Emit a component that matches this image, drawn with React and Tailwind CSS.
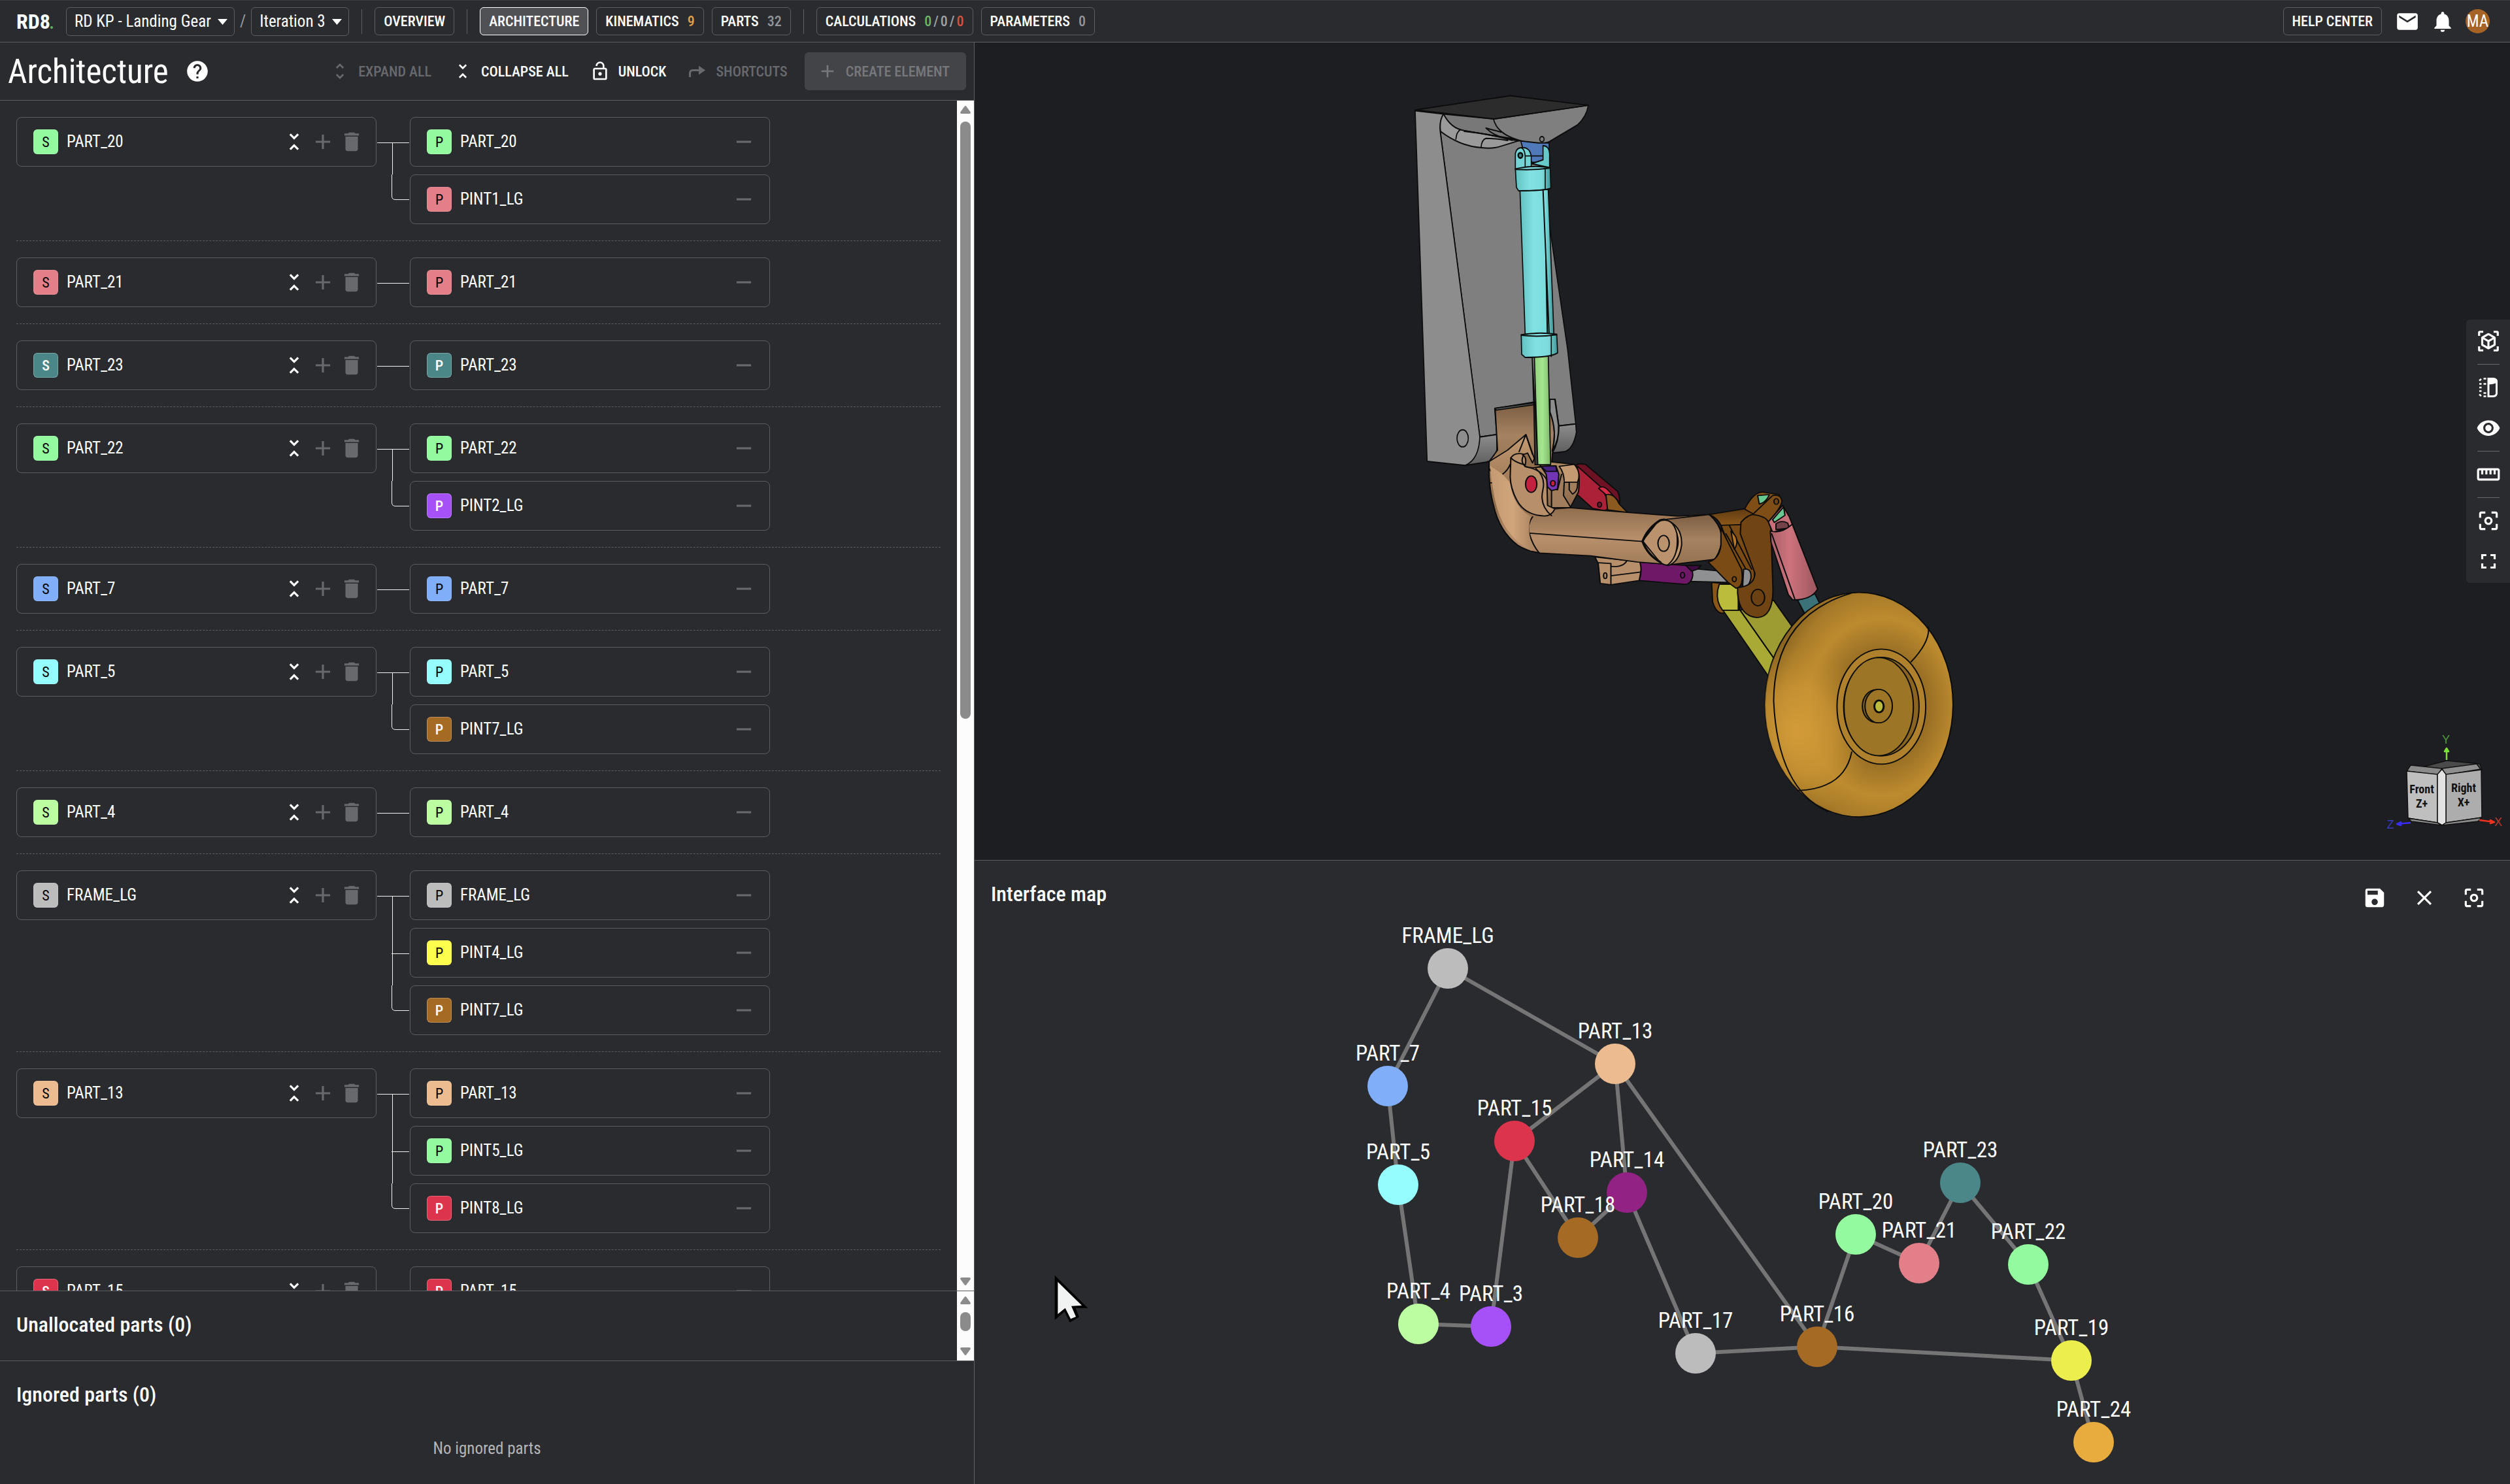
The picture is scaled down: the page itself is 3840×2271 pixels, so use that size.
import React from 'react';
import {
    MdAdd,
    MdCenterFocusWeak,
    MdClose,
    MdDelete,
    MdEmail,
    MdFullscreen,
    MdHelp,
    MdLockOpen,
    MdNotifications,
    MdRemove,
    MdSave,
    MdStraighten,
    MdUnfoldLess,
    MdUnfoldMore,
    MdViewInAr,
    MdVisibility,
} from 'react-icons/md';

// label colour on the badge: dark text unless `light` is set
const COLORS = {
    green: { bg: '#94fa9f' },
    pink: { bg: '#e27f88' },
    teal: { bg: '#4b8788', light: true },
    violet: { bg: '#a551f7', light: true },
    blue: { bg: '#80aef8' },
    cyan: { bg: '#95fdfe' },
    brown: { bg: '#a56a24', light: true },
    lime: { bg: '#bbfda0' },
    grey: { bg: '#bcbcbc' },
    yellow: { bg: '#fdfd4d' },
    peach: { bg: '#ecbc90' },
    red: { bg: '#dc344c', light: true },
};

const SOLIDS = [
    { name: 'PART_20', color: 'green', parts: [['PART_20', 'green'], ['PINT1_LG', 'pink']] },
    { name: 'PART_21', color: 'pink', parts: [['PART_21', 'pink']] },
    { name: 'PART_23', color: 'teal', parts: [['PART_23', 'teal']] },
    { name: 'PART_22', color: 'green', parts: [['PART_22', 'green'], ['PINT2_LG', 'violet']] },
    { name: 'PART_7', color: 'blue', parts: [['PART_7', 'blue']] },
    { name: 'PART_5', color: 'cyan', parts: [['PART_5', 'cyan'], ['PINT7_LG', 'brown']] },
    { name: 'PART_4', color: 'lime', parts: [['PART_4', 'lime']] },
    { name: 'FRAME_LG', color: 'grey', parts: [['FRAME_LG', 'grey'], ['PINT4_LG', 'yellow'], ['PINT7_LG', 'brown']] },
    { name: 'PART_13', color: 'peach', parts: [['PART_13', 'peach'], ['PINT5_LG', 'green'], ['PINT8_LG', 'red']] },
    { name: 'PART_15', color: 'red', parts: [['PART_15', 'red']] },
];

const NODES = {
    FRAME_LG: { x: 724, y: 75, fill: '#bcbcbc' },
    PART_7: { x: 632, y: 255, fill: '#80aef8' },
    PART_5: { x: 648, y: 406, fill: '#95fdfe' },
    PART_4: { x: 679, y: 619, fill: '#bbfda0' },
    PART_3: { x: 790, y: 623, fill: '#a551f7' },
    PART_13: { x: 980, y: 221, fill: '#ecbc90' },
    PART_15: { x: 826, y: 339, fill: '#dc344c' },
    PART_14: { x: 998, y: 418, fill: '#922283' },
    PART_18: { x: 923, y: 487, fill: '#a56a24' },
    PART_17: { x: 1103, y: 664, fill: '#bcbcbc' },
    PART_16: { x: 1289, y: 654, fill: '#a56a24' },
    PART_20: { x: 1348, y: 482, fill: '#94fa9f' },
    PART_21: { x: 1445, y: 526, fill: '#e27f88' },
    PART_23: { x: 1508, y: 403, fill: '#4b8788' },
    PART_22: { x: 1612, y: 528, fill: '#94fa9f' },
    PART_19: { x: 1678, y: 675, fill: '#ebee4c' },
    PART_24: { x: 1712, y: 800, fill: '#e8ab3e' },
};

const EDGES = [
    ['FRAME_LG', 'PART_7'],
    ['FRAME_LG', 'PART_13'],
    ['PART_7', 'PART_5'],
    ['PART_5', 'PART_4'],
    ['PART_4', 'PART_3'],
    ['PART_3', 'PART_15'],
    ['PART_15', 'PART_13'],
    ['PART_15', 'PART_18'],
    ['PART_18', 'PART_14'],
    ['PART_13', 'PART_14'],
    ['PART_13', 'PART_16'],
    ['PART_14', 'PART_17'],
    ['PART_17', 'PART_16'],
    ['PART_16', 'PART_20'],
    ['PART_16', 'PART_19'],
    ['PART_20', 'PART_21'],
    ['PART_21', 'PART_23'],
    ['PART_23', 'PART_22'],
    ['PART_22', 'PART_19'],
    ['PART_19', 'PART_24'],
];

function HeaderSelect({ label, value }) {
    return (
        <div className="relative">
            <select
                aria-label={label}
                defaultValue={value}
                className="h-11 appearance-none rounded-md border border-[#5c5d61] bg-transparent pl-3 pr-[35px] text-[25px] text-white"
            >
                <option>{value}</option>
            </select>
            <svg viewBox="0 0 15 9" className="pointer-events-none absolute right-[11px] top-[18px] h-[9px] w-[15px]" fill="white">
                <path d="M0 0H15L7.5 9Z" />
            </svg>
        </div>
    );
}

function NavButton({ active, children }) {
    return (
        <button
            className={
                active
                    ? 'flex h-[43px] items-center gap-[13px] rounded-md border border-white bg-[#505155] px-[13px] text-[22px] font-medium'
                    : 'flex h-[43px] items-center gap-[13px] rounded-md border border-[#5c5d61] px-[13px] text-[22px] font-medium'
            }
        >
            {children}
        </button>
    );
}

function NavDivider() {
    return <div className="mx-[19px] h-[38px] w-px bg-[#5c5d61]" />;
}

function Header() {
    return (
        <header className="flex h-[65px] shrink-0 items-center border-b border-t border-b-[#5c5d61] border-t-[#3c3d41] bg-[#2a2b2f] pl-[25px] pr-[31px]">
            <a href="#home" className="flex items-baseline text-[32px] font-bold">
                RD8
                <span className="h-1 w-1 rounded-full bg-[#5cb85c]" />
            </a>
            <div className="ml-5 flex items-center gap-2">
                <HeaderSelect label="Project" value="RD KP - Landing Gear" />
                <span className="text-[25px] text-[#9a9b9e]">/</span>
                <HeaderSelect label="Iteration" value="Iteration 3" />
            </div>
            <NavDivider />
            <NavButton>OVERVIEW</NavButton>
            <NavDivider />
            <nav className="flex gap-3">
                <NavButton active>ARCHITECTURE</NavButton>
                <NavButton>
                    KINEMATICS <span className="text-[#e0a04a]">9</span>
                </NavButton>
                <NavButton>
                    PARTS <span className="text-[#939497]">32</span>
                </NavButton>
            </nav>
            <NavDivider />
            <nav className="flex gap-3">
                <NavButton>
                    CALCULATIONS
                    <span className="flex gap-[3px] text-[#a0a1a4]">
                        <span className="text-[#6fb566]">0</span>/<span>0</span>/<span className="text-[#d9503f]">0</span>
                    </span>
                </NavButton>
                <NavButton>
                    PARAMETERS <span className="text-[#939497]">0</span>
                </NavButton>
            </nav>
            <div className="ml-auto flex items-center">
                <NavButton>HELP CENTER</NavButton>
                <button aria-label="Messages" className="ml-5">
                    <MdEmail size={38} />
                </button>
                <button aria-label="Notifications" className="ml-4">
                    <MdNotifications size={38} />
                </button>
                <button className="ml-4 flex h-[37px] w-[37px] items-center justify-center rounded-full bg-[#a56425] text-[25px]">MA</button>
            </div>
        </header>
    );
}

function ShortcutIcon() {
    return (
        <svg width="32" height="32" viewBox="0 0 32 32" fill="none">
            <path d="M4.5 25V19Q4.5 14.5 9 14.5H20" stroke="currentColor" strokeWidth="3" />
            <path d="M18 7.5L28 14.5L18 21.5Z" fill="currentColor" />
        </svg>
    );
}

function SectionIcon() {
    return (
        <svg width="38" height="38" viewBox="0 0 38 38" fill="none">
            <path d="M19 5.5H26Q31.5 6 31.5 10V28Q31.5 32 26 32.5H19Z" stroke="currentColor" strokeWidth="3" />
            <path d="M18 4.5H26Q33 5 33 10.5Q30 14 18 14.5Z" fill="currentColor" />
            <path
                d="M5 8.5L8 6M5 13.5H8.5M5 19H8.5M5 24.5H8.5M5 29.5L8 32M11.5 5.5H15.5M11.5 13.5H15.5M11.5 27.5H15.5M11.5 32.5H15.5"
                stroke="currentColor"
                strokeWidth="2.5"
            />
        </svg>
    );
}

function ToolButton({ icon, disabled, children }) {
    return (
        <button disabled={disabled} className="flex items-center gap-3 text-[22px] font-medium disabled:text-[#68696d]">
            {icon}
            {children}
        </button>
    );
}

function Badge({ letter, color }) {
    const { bg, light } = COLORS[color];
    return (
        <span
            style={{ backgroundColor: bg }}
            className={
                light
                    ? 'flex h-[38px] w-[38px] items-center justify-center rounded-md border border-white/25 text-[22px] font-medium text-white'
                    : 'flex h-[38px] w-[38px] items-center justify-center rounded-md border border-white/10 text-[22px] text-black'
            }
        >
            {letter}
        </span>
    );
}

function Connector({ count }) {
    const height = count * 88 - 12;
    const last = (count - 1) * 88;
    return (
        <svg width="51" height={height} viewBox={`0 0 51 ${height}`} fill="none" stroke="#f2f2f2">
            <path d="M1 39.5H50" />
            {count > 2 && <path d="M23 127.5H50" />}
            {count > 1 && <path d={`M24.5 39V${last}`} />}
            {count > 1 && <path d={`M23.5 ${last}V${last + 33}Q23.5 ${last + 38.5} 29 ${last + 38.5}H50`} />}
        </svg>
    );
}

function SolidRow({ solid }) {
    return (
        <li className="grid grid-cols-[551fr_51px_551fr_261fr] border-b border-dashed border-[#5c5d61] py-[25px]">
            <div className="flex h-[76px] items-center rounded-lg border border-[#5c5d61] pl-[25px] pr-[18px] text-[25px]">
                <Badge letter="S" color={solid.color} />
                <span className="ml-[13px]">{solid.name}</span>
                <div className="ml-auto flex items-center gap-1.5 text-[#68696d]">
                    <button aria-label="Collapse" className="text-white">
                        <MdUnfoldLess size={38} />
                    </button>
                    <button aria-label="Add" disabled>
                        <MdAdd size={38} />
                    </button>
                    <button aria-label="Delete" disabled>
                        <MdDelete size={38} />
                    </button>
                </div>
            </div>
            <Connector count={solid.parts.length} />
            <ul className="flex flex-col gap-3">
                {solid.parts.map(([name, color]) => (
                    <li key={name} className="flex h-[76px] items-center rounded-lg border border-[#5c5d61] pl-[25px] pr-5 text-[25px]">
                        <Badge letter="P" color={color} />
                        <span className="ml-[13px]">{name}</span>
                        <button aria-label="Remove" disabled className="ml-auto text-[#68696d]">
                            <MdRemove size={38} />
                        </button>
                    </li>
                ))}
            </ul>
        </li>
    );
}

function Scrollbar({ thumb }) {
    return (
        <div className="flex w-[26px] shrink-0 flex-col items-center bg-[#fcfcfc] py-2">
            <svg width="16" height="12" viewBox="0 0 16 12" fill="#8b8b8b">
                <path d="M6.5 1Q8 -.8 9.5 1L15.7 9.5Q16.3 12 14 12H2Q-.3 12 .3 9.5Z" />
            </svg>
            <div className="flex w-4 flex-1 flex-col py-3">
                <div className={thumb} />
            </div>
            <svg width="16" height="12" viewBox="0 0 16 12" fill="#8b8b8b">
                <path d="M6.5 11Q8 12.8 9.5 11L15.7 2.5Q16.3 0 14 0H2Q-.3 0 .3 2.5Z" />
            </svg>
        </div>
    );
}

function ArchitecturePanel() {
    return (
        <section className="flex min-h-0 flex-col border-r border-[#5c5d61] bg-[#2a2b2f]">
            <div className="flex h-[89px] shrink-0 items-center border-b border-[#5c5d61] pl-3 pr-3">
                <h1 className="text-[51px] leading-none">Architecture</h1>
                <button aria-label="Help" className="ml-[25px]">
                    <MdHelp size={38} />
                </button>
                <div className="ml-auto flex items-center gap-8">
                    <ToolButton icon={<MdUnfoldMore size={32} />} disabled>
                        EXPAND ALL
                    </ToolButton>
                    <ToolButton icon={<MdUnfoldLess size={32} />}>COLLAPSE ALL</ToolButton>
                    <ToolButton icon={<MdLockOpen size={32} />}>UNLOCK</ToolButton>
                    <ToolButton icon={<ShortcutIcon />} disabled>
                        SHORTCUTS
                    </ToolButton>
                    <button
                        disabled
                        className="-ml-1.5 flex h-[58px] items-center gap-3 rounded-md bg-[#434448] pl-[19px] pr-[25px] text-[22px] font-medium text-[#77787b]"
                    >
                        <MdAdd size={32} />
                        CREATE ELEMENT
                    </button>
                </div>
            </div>

            <div className="flex min-h-0 flex-1">
                <ul className="min-w-0 flex-1 overflow-hidden px-[25px]">
                    {SOLIDS.map((solid) => (
                        <SolidRow key={solid.name} solid={solid} />
                    ))}
                </ul>
                <Scrollbar thumb="h-[52%] rounded-full bg-[#8b8b8b]" />
            </div>

            <div className="flex h-[107px] shrink-0 border-t border-[#5c5d61]">
                <h2 className="flex-1 pl-[25px] pt-[31px] text-[32px] font-medium leading-10">Unallocated parts (0)</h2>
                <Scrollbar thumb="h-[29px] rounded-full bg-[#8b8b8b]" />
            </div>

            <div className="h-[189px] shrink-0 border-t border-[#5c5d61] pt-[31px]">
                <h2 className="pl-[25px] text-[32px] font-medium leading-10">Ignored parts (0)</h2>
                <p className="mt-11 text-center text-[25px] text-[#b4b5b7]">No ignored parts</p>
            </div>
        </section>
    );
}

function LandingGear() {
    return (
        <g stroke="#0c0c0c" strokeLinejoin="round" strokeLinecap="round">
            {/* frame */}
            <g transform="translate(649 55) scale(.3333 .3954)" strokeWidth="5">
                <path d="M190 200L372 1388L450 1378L440 1278L640 1250L718 1242L735 1345L812 1337L775 1050L690 560L680 230L205 140Z" fill="#7f7f7f" />
                <path d="M75 125L130 1482L305 1498Q372 1480 372 1388L190 205Q185 165 205 138Z" fill="#8d8d8d" />
                <path d="M372 1388L450 1378V1435Q445 1478 400 1485L305 1498Q368 1475 372 1388Z" fill="url(#lug)" />
                <path d="M735 1345L812 1337L815 1370Q800 1436 760 1445L705 1450Q735 1410 735 1345Z" fill="url(#lug)" />
                <path d="M205 138L435 157Q445 200 540 236L300 202Q240 195 205 138Z" fill="#787878" />
                <path d="M205 138Q185 165 192 205Q280 262 380 268Q430 274 470 262L555 240L300 202Q240 195 205 138Z" fill="#9a9a9a" />
                <path d="M262 235Q265 208 280 200M378 266Q380 238 400 232Q440 232 500 240M300 205Q420 215 520 240M400 192Q450 235 560 242M400 192L470 208" fill="none" />
                <path d="M435 157L870 104Q860 150 820 180L690 245Q640 262 555 240Q450 215 435 157Z" fill="#7f7f7f" />
                <path d="M75 122L512 67L870 104L435 157Z" fill="#2c2c2c" />
                <ellipse cx="293" cy="1393" rx="26" ry="33" fill="#8d8d8d" />
            </g>

            {/* main arm, links and wheel */}
            <g transform="translate(749 535) scale(.5102 .4337)" strokeWidth="4">
                <path d="M93 62L210 42L258 75Q278 120 266 200L262 262L75 245L100 205Z" fill="url(#tanDark)" />
                <path d="M93 57L210 38L212 44L96 64Z" fill="#555" />
                <path d="M257 25L272 26L283 118Q285 170 264 208Q280 140 257 70Z" fill="#8d8d8d" />

                <path d="M335 258Q345 250 365 256L460 350Q468 370 466 392L430 415L345 330Z" fill="#6d1224" />
                <path d="M340 262L410 335L430 378Q440 415 420 418L385 410L328 350Z" fill="#ab2238" />
                <path d="M403 340Q415 325 435 350L462 385L425 362Z" fill="#d42c46" />
                <path d="M425 362Q450 355 465 395L490 425L430 415Z" fill="#8a5a20" />
                <ellipse cx="406" cy="397" rx="6" ry="9" fill="#7a1428" />

                <path d="M392 582L402 605L408 675L440 680L525 665L535 600Z" fill="#b78f6b" />
                <path d="M402 602L440 605V678M440 648L530 635M440 615Q480 620 490 590" fill="none" />
                <ellipse cx="423" cy="648" rx="5" ry="10" fill="#ab8563" />
                <path d="M675 622L800 635V672L675 668Z" fill="#8f9092" />
                <path d="M527 600L665 612Q688 620 685 650Q680 680 660 678L525 665Q535 630 527 600Z" fill="#6f1867" />
                <path d="M665 612L710 612L700 625L682 632Z" fill="#3d0c40" />
                <ellipse cx="655" cy="646" rx="6" ry="10" fill="#6f1867" />

                <path d="M75 245L130 205L185 150L212 240L330 255Q350 270 343 352L318 408L420 418L640 438L735 432Q800 500 750 590L605 607L520 600L380 578L228 568Q185 560 160 540Q105 490 88 400Q72 330 75 245Z" fill="url(#tan)" />
                <path d="M75 270Q90 300 115 290Q132 275 138 255M78 320H138M165 210L185 150L205 220M205 440Q188 470 195 498Q205 540 225 568M195 498L535 527M273 412L320 408" fill="none" />
                <path d="M200 560Q105 500 88 350Q80 300 78 260L115 290L138 320Q145 400 200 440Q185 500 212 560Z" fill="url(#elbow)" stroke="none" />
                <path d="M285 262L330 255Q352 285 340 318L300 318Q300 285 285 262Z" fill="#c39a72" />
                <path d="M300 318H340Q342 350 325 360L315 345V318M300 318L298 365L320 408H262V340L280 345L292 290" fill="#a27d5b" />
                <path d="M140 232Q152 210 180 220Q165 245 185 264Q235 275 248 312L250 400L272 412Q262 438 240 437Q190 435 165 395Q140 350 138 300Z" fill="#b78f6b" />
                <path d="M140 232Q160 258 228 265M215 270Q245 300 236 345Q225 400 262 436" fill="none" />
                <path d="M175 222Q190 230 182 262Q205 272 230 262L212 230L205 250L190 215Z" fill="#94704e" />
                <ellipse cx="201" cy="325" rx="17" ry="29" fill="#c2223f" />
                <path d="M230 262L275 260L284 290L280 342L262 348L250 335L246 290Z" fill="#7236b5" />
                <path d="M230 262L275 260L278 280H246Z" fill="#4a2484" />
                <ellipse cx="266" cy="322" rx="7" ry="10" fill="#c2223f" />

                <path d="M600 450L735 432Q800 500 752 590L610 610Z" fill="url(#tanDark)" />
                <path d="M600 448Q655 470 652 540Q645 600 612 612L598 608Q650 570 640 510Q630 460 590 450Z" fill="#c39a72" />
                <path d="M535 525L580 458Q625 435 638 500Q645 580 610 610Q595 612 580 590Z" fill="#ba926d" />
                <path d="M535 527Q550 480 588 452M535 527Q550 575 588 600" strokeWidth="7" fill="none" />
                <ellipse cx="598" cy="534" rx="17" ry="28" fill="#ba926d" />

                {/* lower leg */}
                <path d="M742 672L745 740Q755 780 775 780L825 770V680Z" fill="#8a5519" />
                <path d="M775 768L828 770L928 938L912 1002Z" fill="#a9a936" />
                <path d="M828 770L928 735L985 830L928 938Z" fill="#9c9c33" />
                <path d="M765 678H822V770H775Q755 740 760 700Z" fill="#bcbc3c" />

                {/* crank */}
                <path d="M842 410Q870 350 895 353L945 362L915 455L842 420Z" fill="#7f4e17" />
                <path d="M735 432L840 412L870 432L835 470L770 470Q760 445 735 432Z" fill="url(#crankTop)" />
                <path d="M770 470L830 468L870 625Q875 690 845 688L800 560Z" fill="#7b4b15" />
                <path d="M770 480L832 625Q840 690 815 692L790 670L732 600Q765 590 770 540Z" fill="#7b4b15" />
                <path d="M795 470L862 625M785 500L845 625" fill="none" />
                <path d="M800 490Q830 520 810 555Z" fill="#b87522" />
                <path d="M838 625Q862 620 860 655Q855 690 835 686Z" fill="#8f9092" />
                <path d="M830 460Q850 430 880 430Q915 440 920 480L926 700Q925 795 878 796Q825 790 820 710V690Q870 685 872 640L828 500Z" fill="#714413" />
                <path d="M865 432L925 365Q950 360 953 385Q950 410 912 458Q905 438 865 432Z" fill="#7f4e17" />
                <path d="M880 365L915 362Q905 390 885 395Z" fill="#69c790" />
                <ellipse cx="936" cy="386" rx="7" ry="10" fill="#714413" />
                <ellipse cx="881" cy="725" rx="20" ry="29" fill="#6b4012" />
                <ellipse cx="810" cy="660" rx="6" ry="9" fill="#7b4b15" />

                {/* shock absorber */}
                <path d="M912 458L955 400L975 440L985 470L925 495Z" fill="#c8707a" />
                <path d="M925 450L958 405L962 435L930 460Z" fill="#69c790" />
                <path d="M935 465Q950 450 970 462L975 480L935 485Z" fill="#74434a" />
                <path d="M1000 735L1052 712L1068 750L1025 790Z" fill="#3b7277" />
                <path d="M918 490Q950 502 984 466L1060 695Q1040 735 985 733L972 715L920 530Z" fill="url(#shock)" />
                <path d="M922 500L992 732" fill="none" />

                {/* wheel */}
                <ellipse cx="1184" cy="1103" rx="282" ry="396" fill="url(#tyre)" />
                <ellipse cx="1184" cy="1103" rx="282" ry="396" fill="url(#tyreGlow)" stroke="none" />
                <path d="M1160 710Q930 790 928 1090Q940 1400 1090 1480" fill="none" />
                <path d="M1392 828Q1398 880 1340 952M1162 1270Q1140 1400 1000 1406" fill="none" />
                <ellipse cx="1251" cy="1110" rx="133" ry="203" fill="#af812c" />
                <ellipse cx="1251" cy="1110" rx="113" ry="174" fill="#8a6420" />
                <ellipse cx="1243" cy="1110" rx="104" ry="173" fill="#9c7526" />
                <ellipse cx="1236" cy="1108" rx="42" ry="58" fill="#82601f" />
                <ellipse cx="1243" cy="1108" rx="41" ry="59" fill="#9c7526" />
                <ellipse cx="1244" cy="1109" rx="14" ry="21" fill="#bcbc3c" strokeWidth="6" />
            </g>

            {/* hydraulic cylinder and rod */}
            <g transform="translate(649 55) scale(.3333 .3954)" strokeWidth="5">
                <path d="M612 1075L640 1495H625L620 1280Z" fill="#3a3a3a" />
                <path d="M622 1070H686L697 1495H638Z" fill="url(#rod)" />
                <path d="M560 242L640 250H690V300L650 325H612L575 290Z" fill="#4f79b8" />
                <path d="M662 260Q690 262 692 290V345L610 330L662 315Z" fill="#68c9cb" />
                <path d="M535 350V290Q540 268 565 268Q600 265 608 300V350Z" fill="#74d3d5" />
                <path d="M580 350V300Q578 275 562 268M582 300H660" fill="none" />
                <circle cx="558" cy="298" r="10" fill="#3d8b8d" strokeWidth="7" />
                <circle cx="657" cy="235" r="10" fill="#7f7f7f" />
                <path d="M556 430H686L712 990H580Z" fill="url(#cyl)" />
                <path d="M662 430L690 990M675 700L682 990" fill="none" strokeWidth="6" />
                <path d="M535 350Q610 335 695 345L698 425Q670 435 550 435L540 422Z" fill="url(#cyl)" />
                <path d="M535 352Q620 356 695 347M672 350V430" fill="none" />
                <path d="M562 992Q640 980 725 990L729 1062Q700 1080 580 1080L564 1068Z" fill="url(#cyl)" />
                <path d="M562 994Q640 1002 725 992M700 996V1076" fill="none" />
            </g>
        </g>
    );
}

function ViewCube() {
    return (
        <g stroke="#111" strokeWidth="1.5" strokeLinejoin="round">
            <path d="M2191 1115L2252 1099L2303 1104L2306 1113L2246 1121Z" fill="#4a4a4a" />
            <path d="M2191 1115L2197 1106L2245 1111L2239 1121Z" fill="#8a8a8a" />
            <path d="M2249 1121L2245 1111L2298 1104L2304 1112Z" fill="#8f8f8f" />
            <path d="M2191 1115L2238 1120V1194L2193 1187Z" fill="#bfbfbf" />
            <path d="M2251 1120L2305 1113L2306 1186L2251 1194Z" fill="#adadad" />
            <path d="M2238 1120L2245 1112L2251 1120V1194L2245 1198L2238 1194Z" fill="#e2e2e2" />
            <path d="M2193 1187L2238 1194L2245 1198L2251 1194L2306 1186L2300 1192L2245 1198L2198 1192Z" fill="#8a8a8a" />
            <g stroke="none" fill="#111" textAnchor="middle" className="font-['Roboto_Condensed'] text-lg font-bold">
                <text x="2214" y="1149">Front</text>
                <text x="2214" y="1171">Z+</text>
                <text x="2278" y="1147">Right</text>
                <text x="2278" y="1169">X+</text>
            </g>
            <g strokeWidth="2.5">
                <path d="M2252 1098V1083M2249 1085L2252 1080L2255 1085Z" stroke="#7be03a" fill="#7be03a" />
                <path d="M2197 1194L2177 1196M2182 1193L2176 1196L2182 1198Z" stroke="#3a2bff" fill="#3a2bff" />
                <path d="M2302 1190L2324 1193M2319 1190L2325 1193L2319 1195Z" stroke="#f0321e" fill="#f0321e" />
            </g>
            <g stroke="none" textAnchor="middle" className="font-['Liberation_Sans'] text-lg">
                <text x="2251" y="1073" fill="#4f9a3c">Y</text>
                <text x="2166" y="1203" fill="#3a3ac0">Z</text>
                <text x="2331" y="1199" fill="#b5382f">X</text>
            </g>
        </g>
    );
}

function Viewer() {
    return (
        <section className="relative min-h-0 bg-[#1d1e22]">
            <svg viewBox="0 0 2349 1251" preserveAspectRatio="xMaxYMin meet" className="h-full w-full">
                <defs>
                    <linearGradient id="lug" x1="0" y1="0" x2="0" y2="1">
                        <stop offset="0" stopColor="#8d8d8d" />
                        <stop offset="1" stopColor="#5e5e5e" />
                    </linearGradient>
                    <linearGradient id="tan" x1="0" y1="0" x2="0" y2="1">
                        <stop offset="0" stopColor="#c39a72" />
                        <stop offset=".55" stopColor="#8d6b4b" />
                        <stop offset=".8" stopColor="#b78f6b" />
                        <stop offset="1" stopColor="#a27d5b" />
                    </linearGradient>
                    <linearGradient id="tanDark" x1="0" y1="0" x2="0" y2="1">
                        <stop offset="0" stopColor="#7c5e43" />
                        <stop offset=".5" stopColor="#a58260" />
                        <stop offset="1" stopColor="#94724f" />
                    </linearGradient>
                    <linearGradient id="elbow" x1="0" y1="0" x2="1" y2="0">
                        <stop offset="0" stopColor="#c39a72" />
                        <stop offset=".5" stopColor="#d0a57c" />
                        <stop offset="1" stopColor="#a8825f" />
                    </linearGradient>
                    <linearGradient id="crankTop" x1="0" y1="0" x2="0" y2="1">
                        <stop offset="0" stopColor="#5f3a10" />
                        <stop offset="1" stopColor="#8d591b" />
                    </linearGradient>
                    <linearGradient id="shock" x1="0" y1="0" x2="1" y2="0">
                        <stop offset="0" stopColor="#a85f67" />
                        <stop offset=".4" stopColor="#cd737d" />
                        <stop offset="1" stopColor="#9c565e" />
                    </linearGradient>
                    <linearGradient id="cyl" x1="0" y1="0" x2="1" y2="0">
                        <stop offset="0" stopColor="#62bfc0" />
                        <stop offset=".4" stopColor="#82e2e3" />
                        <stop offset=".75" stopColor="#7cdcdd" />
                        <stop offset="1" stopColor="#3f9395" />
                    </linearGradient>
                    <linearGradient id="rod" x1="0" y1="0" x2="1" y2="0">
                        <stop offset="0" stopColor="#8fd07a" />
                        <stop offset=".5" stopColor="#a6e690" />
                        <stop offset="1" stopColor="#7cb669" />
                    </linearGradient>
                    <radialGradient id="tyre" cx=".62" cy=".51" r=".6">
                        <stop offset=".3" stopColor="#8f6822" />
                        <stop offset=".42" stopColor="#9a7025" />
                        <stop offset=".66" stopColor="#bd8b2f" />
                        <stop offset=".85" stopColor="#a87b29" />
                        <stop offset="1" stopColor="#8a6420" />
                    </radialGradient>
                    <radialGradient id="tyreGlow" cx=".17" cy=".62" r=".4">
                        <stop offset="0" stopColor="#d39c38" />
                        <stop offset=".5" stopColor="#cc9634" stopOpacity=".7" />
                        <stop offset="1" stopColor="#b98a2e" stopOpacity="0" />
                    </radialGradient>
                </defs>
                <LandingGear />
                <ViewCube />
            </svg>
            <div className="absolute right-0 top-[424px] flex w-[67px] flex-col items-center rounded-l-md bg-[#2a2b2f] py-3.5">
                <button aria-label="Orient view">
                    <MdViewInAr size={38} />
                </button>
                <div className="my-4 h-px w-[34px] bg-[#68696d]" />
                <div className="flex flex-col gap-6">
                    <button aria-label="Section">
                        <SectionIcon />
                    </button>
                    <button aria-label="Visibility">
                        <MdVisibility size={38} />
                    </button>
                </div>
                <div className="my-4 h-px w-[34px] bg-[#68696d]" />
                <button aria-label="Measure">
                    <MdStraighten size={38} />
                </button>
                <div className="my-4 h-px w-[34px] bg-[#68696d]" />
                <div className="flex flex-col gap-6">
                    <button aria-label="Center">
                        <MdCenterFocusWeak size={38} />
                    </button>
                    <button aria-label="Fullscreen">
                        <MdFullscreen size={38} />
                    </button>
                </div>
            </div>
        </section>
    );
}

function InterfaceMap() {
    return (
        <section className="relative flex min-h-0 flex-col border-t border-[#5c5d61] bg-[#2a2b2f]">
            <div className="flex h-[90px] shrink-0 items-start pl-[25px] pr-9 pt-[31px]">
                <h2 className="text-[32px] font-medium leading-10">Interface map</h2>
                <div className="ml-auto flex gap-[38px] pt-[7px]">
                    <button aria-label="Save">
                        <MdSave size={38} />
                    </button>
                    <button aria-label="Close">
                        <MdClose size={38} />
                    </button>
                    <button aria-label="Center">
                        <MdCenterFocusWeak size={38} />
                    </button>
                </div>
            </div>
            <svg viewBox="0 0 2349 864" className="min-h-0 w-full flex-1">
                <g stroke="#757575" strokeWidth="6">
                    {EDGES.map(([a, b]) => (
                        <line key={a + b} x1={NODES[a].x} y1={NODES[a].y} x2={NODES[b].x} y2={NODES[b].y} />
                    ))}
                </g>
                {Object.entries(NODES).map(([name, node]) => (
                    <circle key={name} cx={node.x} cy={node.y} r="31" fill={node.fill} />
                ))}
                <g fill="#fff" textAnchor="middle" className="text-[33px]">
                    {Object.entries(NODES).map(([name, node]) => (
                        <text key={name} x={node.x} y={node.y - 39}>
                            {name}
                        </text>
                    ))}
                </g>
            </svg>
            <svg viewBox="640 153 156 219" className="pointer-events-none absolute left-[122px] top-[634px] h-[73px] w-[52px]">
                <path d="M642 155L794 305H737L754 346L711 371L687 322L642 360Z" fill="#000" />
                <path d="M656 185L766 293L718 296L739 345L715 355L690 305L656 333Z" fill="#f1f3f2" />
            </svg>
        </section>
    );
}

export default function App() {
    return (
        <div className="flex h-screen flex-col overflow-hidden bg-[#2a2b2f] font-['Roboto_Condensed',Roboto,sans-serif] text-white">
            <Header />
            <main className="grid min-h-0 flex-1 grid-cols-[1491fr_2349fr]">
                <ArchitecturePanel />
                <div className="grid min-h-0 grid-rows-[1251fr_955fr]">
                    <Viewer />
                    <InterfaceMap />
                </div>
            </main>
        </div>
    );
}
